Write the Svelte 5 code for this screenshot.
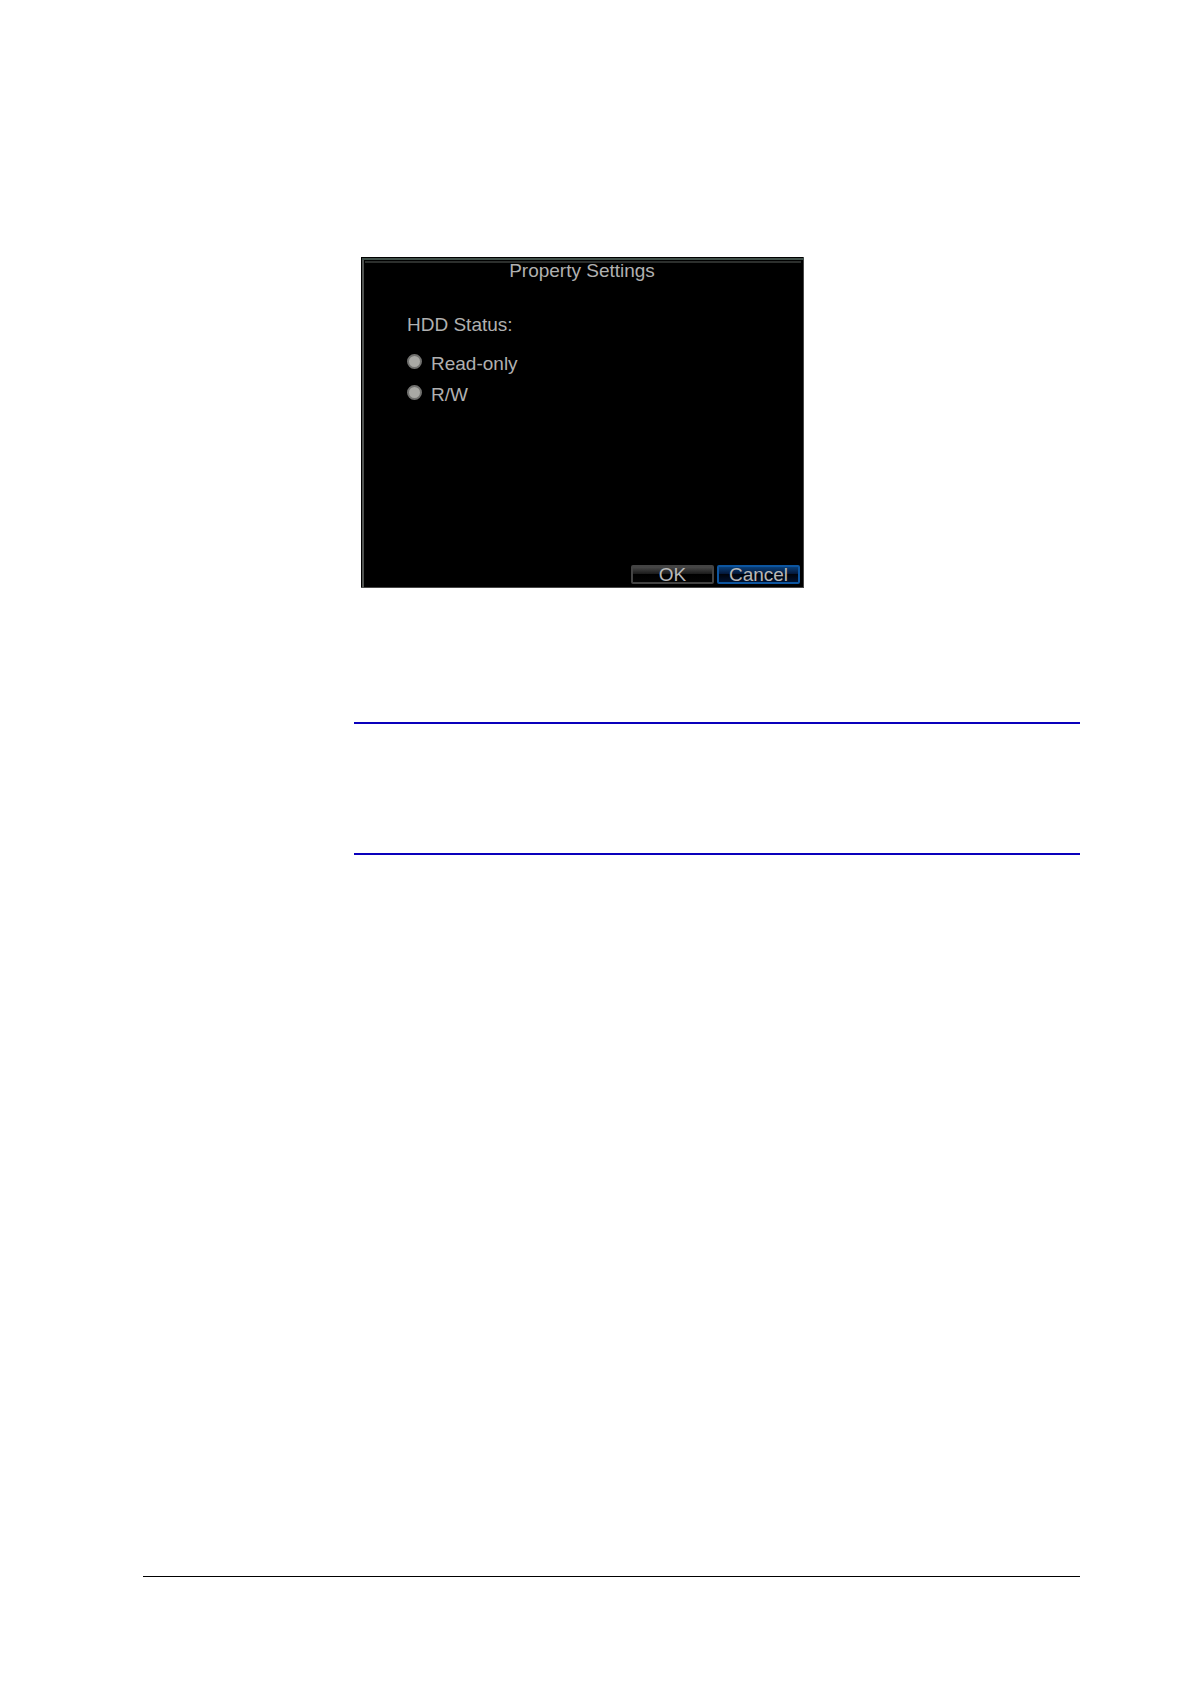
<script>
    let hddStatus = $state("");

    const options = [
        { value: "readonly", label: "Read-only" },
        { value: "rw", label: "R/W" },
    ];
</script>

<main class="page">
    <div class="content">
        <form class="dialog" onsubmit={(e) => e.preventDefault()}>
            <h1>Property Settings</h1>
            <fieldset>
                <legend>HDD Status:</legend>
                {#each options as option}
                    <label>
                        <input
                            type="radio"
                            name="hdd"
                            value={option.value}
                            bind:group={hddStatus}
                        />
                        <span>{option.label}</span>
                    </label>
                {/each}
            </fieldset>
            <div class="buttons">
                <button type="submit">OK</button>
                <button type="button" class="active">Cancel</button>
            </div>
        </form>

        <section class="note"></section>
    </div>
    <footer></footer>
</main>

<style>
    :global(body) {
        margin: 0;
        background: #fff;
    }

    .page {
        box-sizing: border-box;
        min-height: 100vh;
        padding: 257px 110px 107px 143px;
        display: flex;
        flex-direction: column;
        font-family: "Liberation Sans", Arial, sans-serif;
    }

    .content {
        flex: 1;
        padding-left: 211px;
    }

    .dialog {
        box-sizing: border-box;
        max-width: 443px;
        min-height: 331px;
        margin-left: 7px;
        padding: 4px 4px 4px 3px;
        display: flex;
        flex-direction: column;
        color: #b0b0b0;
        font-size: 19px;
        line-height: 20px;
        /* bevelled frame: top, inner top, left, right and bottom edges */
        background:
            linear-gradient(#3f4f49, #3f4f49) 1px 1px / 100% 2px no-repeat,
            linear-gradient(#2c2f2d, #2c2f2d) 4px 4px / 436px 2px no-repeat,
            linear-gradient(#505351, #505351) 1px 1px / 2px 100% no-repeat,
            linear-gradient(#484848, #484848) 100% 0 / 1px 100% no-repeat,
            linear-gradient(#484848, #484848) 0 100% / 100% 1px no-repeat,
            #000;
    }

    h1 {
        margin: 0;
        font-size: 19px;
        font-weight: normal;
        text-align: center;
    }

    fieldset {
        flex: 1;
        margin: 0;
        padding: 13px 0 0 43px;
        border: 0;
    }

    legend {
        padding: 34px 0 0;
    }

    label {
        display: flex;
        gap: 9px;
        height: 31px;
        line-height: 32px;
    }

    input {
        appearance: none;
        flex: none;
        width: 15px;
        height: 15px;
        margin: 6px 0 0;
        border: 2px solid #71716f;
        border-radius: 50%;
        background: #a9a9a5;
    }

    input:checked {
        background: radial-gradient(#111 30%, #a9a9a5 40%);
    }

    .buttons {
        display: flex;
        justify-content: flex-end;
        gap: 3px;
    }

    button {
        box-sizing: border-box;
        width: 83px;
        height: 19px;
        padding: 0;
        border: 2px solid #444;
        border-radius: 2px;
        background: linear-gradient(#484848, #1c1c1c 45%, #000 50%, #050505);
        color: #b8b8b8;
        font-family: inherit;
        font-size: 19px;
        line-height: 15px;
    }

    button.active {
        border-color: #0c55a0;
        background: linear-gradient(#0a3f78, #04183a 45%, #00040c 50%, #001230);
    }

    .note {
        height: 129px;
        margin-top: 134px;
        border: solid #0a00bc;
        border-width: 2px 0;
    }

    footer {
        border-top: 1px solid #000;
    }
</style>
